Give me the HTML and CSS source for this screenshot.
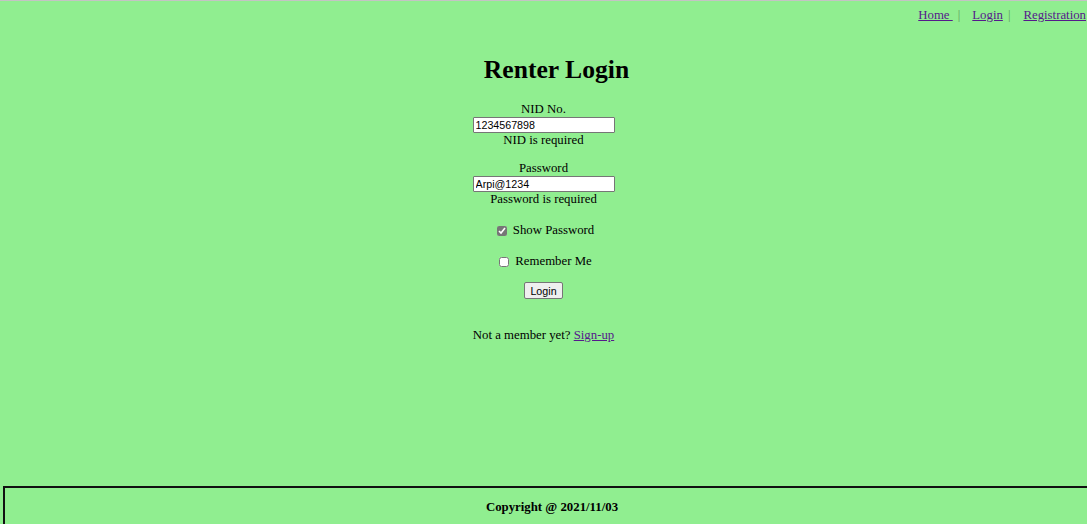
FILE: index.html
```html
<!DOCTYPE html>
<html>
<head>
<meta charset="utf-8">
<title>Renter Login</title>
<link rel="stylesheet" href="styles.css">
</head>
<body>
<div class="page">
  <nav class="topnav">
    <a href="#">Home&nbsp;</a><span class="pipe">|</span>
    <a href="#">Login</a><span class="pipe">|</span>
    <a href="#">Registration</a>
  </nav>
  <main class="main">
    <h1 class="title">Renter Login</h1>
    <form class="form">
      <label class="label">NID No.</label>
      <input class="field" type="text" value="1234567898">
      <div class="error">NID is required</div>
      <label class="label gap">Password</label>
      <input class="field" type="text" value="Arpi@1234">
      <div class="error">Password is required</div>
      <label class="check first"><input type="checkbox" class="box" checked>Show Password</label>
      <label class="check second"><input type="checkbox" class="box">Remember Me</label>
      <button type="button" class="btn">Login</button>
      <p class="member">Not a member yet? <a href="#">Sign-up</a></p>
    </form>
  </main>
  <footer class="footer">Copyright @ 2021/11/03</footer>
</div>
</body>
</html>
```
FILE: styles.css
```css
html, body {
  margin: 0;
  padding: 0;
}
body {
  background: #90ee90;
  font-family: "Liberation Serif", "Times New Roman", serif;
  font-size: 12.8px;
  line-height: 15px;
  color: #000;
  overflow: hidden;
}
.page {
  height: 524px;
  box-sizing: border-box;
  border-top: 1px solid #c4c4c4;
  display: flex;
  flex-direction: column;
}
a {
  color: #551a8b;
}
.topnav {
  display: flex;
  justify-content: flex-end;
  padding: 7px 1px 0 0;
}
.pipe {
  color: #5f9a5f;
  margin: 0 13px 0 5px;
}
.pipe:first-of-type {
  margin-right: 12px;
}
.main {
  flex: 1;
  display: flex;
  flex-direction: column;
  align-items: center;
}
.title {
  font-size: 25.6px;
  line-height: 30px;
  font-weight: bold;
  margin: 32px 0 0 26px;
}
.form {
  display: flex;
  flex-direction: column;
  align-items: center;
  margin-top: 17px;
}
.label {
  display: block;
}
.label.gap {
  margin-top: 13px;
}
.field {
  box-sizing: border-box;
  width: 142px;
  height: 16px;
  margin: 0;
  padding: 0 2px;
  border: 1px solid #767676;
  border-radius: 1px;
  background: #fff;
  font-family: "Liberation Sans", Arial, sans-serif;
  font-size: 10.7px;
  color: #000;
}
.check {
  display: flex;
  align-items: center;
}
.check.first {
  margin-top: 16px;
}
.check.second {
  margin-top: 16px;
}
.box {
  width: 10px;
  height: 10px;
  margin: 0 6px 0 4px;
  accent-color: #767676;
}
.btn {
  box-sizing: border-box;
  width: 39px;
  height: 17px;
  margin-top: 13px;
  padding: 0;
  border: 1px solid #767676;
  border-radius: 2px;
  background: #efefef;
  font-family: "Liberation Sans", Arial, sans-serif;
  font-size: 10.7px;
  color: #000;
}
.member {
  margin: 29px 0 0;
}
.footer {
  box-sizing: border-box;
  width: 1098px;
  height: 38px;
  margin-left: 3px;
  flex-shrink: 0;
  border: 2px solid #111;
  border-bottom: none;
  padding-top: 12px;
  text-align: center;
  font-weight: bold;
}
```
